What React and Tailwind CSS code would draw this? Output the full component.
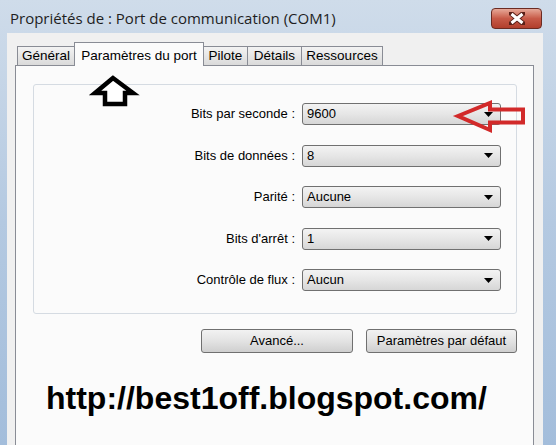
import React from 'react';

const rows = [
  { label: 'Bits par seconde :', value: '9600' },
  { label: 'Bits de données :', value: '8' },
  { label: 'Parité :', value: 'Aucune' },
  { label: "Bits d'arrêt :", value: '1' },
  { label: 'Contrôle de flux :', value: 'Aucun' },
];

const tabs = [
  { name: 'Général', w: 'w-[58px]' },
  { name: 'Paramètres du port', w: 'w-[130px]', active: true },
  { name: 'Pilote', w: 'w-[45px]' },
  { name: 'Détails', w: 'w-[55px]' },
  { name: 'Ressources', w: 'w-[82px]' },
];

function Combo({ value }) {
  return (
    <div className="flex items-center justify-between h-[22px] w-[199px] rounded-[3px] border border-[#707070] bg-linear-to-b from-[#f3f3f3] via-[#e6e6e6] to-[#d6d6d6] pl-[4px] pr-[7px] text-[13px] text-black">
      <span>{value}</span>
      <svg width="9" height="5" viewBox="0 0 9 5">
        <path d="M0 0 L9 0 L4.5 5 Z" fill="#000" />
      </svg>
    </div>
  );
}

function Button({ children, w }) {
  return (
    <div className={`flex items-center justify-center h-[24px] ${w} rounded-[3px] border border-[#707070] bg-linear-to-b from-[#f2f2f2] via-[#e3e3e3] to-[#cfcfcf] text-[13px] text-black`}>
      {children}
    </div>
  );
}

export default function App() {
  return (
    <div
      className="relative w-[556px] h-[445px] overflow-hidden bg-linear-to-b from-[#cfdcea] via-[#b4c9e1] to-[#a3bddb] text-black"
      style={{ fontFamily: '"Liberation Sans", Arial, sans-serif' }}
    >
      {/* title bar */}
      <div className="flex items-center justify-between h-[33px] pl-[10px] pr-[14px]">
        <span className="text-[15px] text-[#1e1e1e] pt-[3px]" style={{ fontFamily: '"Open Sans", sans-serif' }}>
          Propriétés de : Port de communication (COM1)
        </span>
        <div className="flex items-center justify-center w-[51px] h-[21px] mt-[4px] rounded-[4px] border border-[#6b2b22] bg-linear-to-b from-[#e6a898] via-[#c75a48] to-[#b13e2c]">
          <svg width="16" height="13" viewBox="0 0 16 13">
            <path d="M2 1.5 L14 11.5 M14 1.5 L2 11.5" stroke="#5a2018" strokeWidth="5" strokeLinecap="square" />
            <path d="M2.5 2 L13.5 11 M13.5 2 L2.5 11" stroke="#fff" strokeWidth="3" />
          </svg>
        </div>
      </div>

      {/* client area */}
      <div className="ml-[7px] mr-[13px] h-[412px] bg-[#f0f0f0] pt-[9px] pl-[8px] pr-[9px]">
        <div className="flex items-end ml-[2px] h-[24px] relative z-10 -mb-px">
          {tabs.map(t =>
            t.active ? (
              <div key={t.name} className={`${t.w} h-[24px] -ml-px border border-b-0 border-[#898c95] bg-[#fbfbfb] flex items-start justify-center pt-[3px] text-[13.5px]`}>
                {t.name}
              </div>
            ) : (
              <div key={t.name} className={`${t.w} h-[20px] -ml-px first:ml-0 border border-[#898c95] bg-linear-to-b from-[#f3f3f3] to-[#dadada] flex items-center justify-center text-[13.5px]`}>
                {t.name}
              </div>
            )
          )}
        </div>

        <div className="h-[400px] border border-[#898c95] bg-[#fbfbfb] pt-[18px] pl-[17px] pr-[16px]">
          <div className="h-[230px] rounded-[3px] border border-[#d5dbe2] pt-[18px]">
            <div className="flex flex-col gap-[19.5px]">
              {rows.map(r => (
                <div key={r.label} className="flex items-center">
                  <div className="w-[268px] text-right text-[13px] pr-[7px]">{r.label}</div>
                  <Combo value={r.value} />
                </div>
              ))}
            </div>
          </div>

          <div className="flex justify-end gap-[13px] mt-[15px]">
            <Button w="w-[152px]">Avancé...</Button>
            <Button w="w-[151px]">Paramètres par défaut</Button>
          </div>

          <div className="mt-[26px] pl-[13px] text-[32px] font-bold leading-[38px]">
            http://best1off.blogspot.com/
          </div>
        </div>
      </div>

      {/* annotation arrows */}
      <svg className="absolute left-0 top-0 pointer-events-none" width="556" height="445">
        <path d="M113 78 L95 93 L105 93 L105 104 L125 104 L125 93 L133 93 Z" fill="#fff" stroke="#000" strokeWidth="4.5" strokeLinejoin="miter" />
        <path d="M458 116 L490 103 L490 109.5 L523 109.5 L523 122.5 L490 122.5 L490 130 Z" fill="none" stroke="#d22a2a" strokeWidth="4" strokeLinejoin="miter" />
      </svg>
    </div>
  );
}
